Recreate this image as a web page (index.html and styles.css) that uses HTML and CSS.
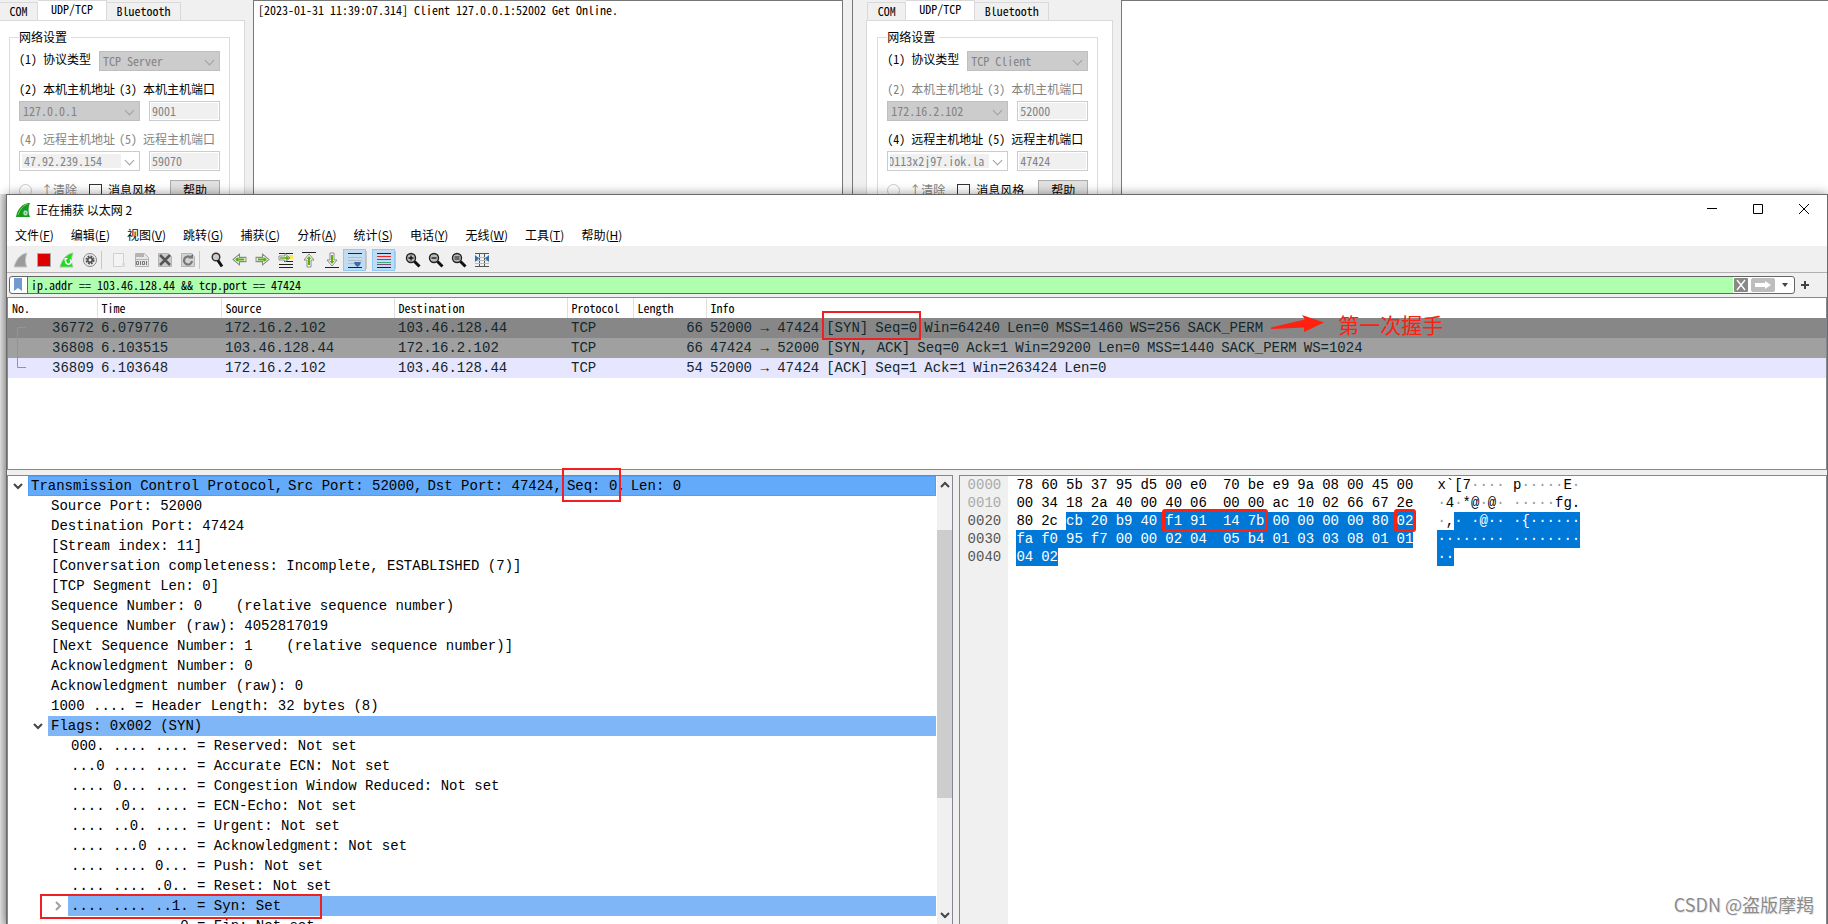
FILE: index.html
```html
<!DOCTYPE html>
<html lang="zh-CN">
<head>
<meta charset="utf-8">
<title>正在捕获 以太网 2</title>
<link rel="stylesheet" href="styles.css">
</head>
<body>
<svg class="defs" width="0" height="0" aria-hidden="true">
  <defs>
    <symbol id="arrow" viewBox="0 0 14 12"><path d="M1 4h6V1l6 5-6 5V8H1z" fill="#fff" stroke="#8a8a84"/><path d="M2.500 6h8" stroke="#58b010" stroke-width="2"/><path d="M8 3.500 11 6 8 8.500z" fill="#58b010"/></symbol>
    <symbol id="lens" viewBox="0 0 16 16"><circle cx="6" cy="6" r="4.500" fill="#b9bcb6" stroke="#222" stroke-width="1.400"/><path d="m9.500 9.500 5 5" stroke="#111" stroke-width="3"/></symbol>
  </defs>
</svg>

<div class="desktop">
  <section class="tool-window">
    <div class="side">
      <nav class="tabs"><button>COM</button><button class="active">UDP/TCP</button><button>Bluetooth</button></nav>
      <form class="tab-page">
        <fieldset>
          <legend>网络设置</legend>
          <div class="type-row"><label for="p1">(1) 协议类型</label><span class="combo grey"><select id="p1" disabled><option>TCP Server</option></select></span></div>
          <div class="labels"><label for="h1">(2) 本机主机地址</label><label for="o1">(3) 本机主机端口</label></div>
          <div class="controls"><span class="combo grey"><select id="h1" disabled><option>127.0.0.1</option></select></span><input id="o1" value="9001" disabled></div>
          <div class="labels dim"><label for="r1">(4) 远程主机地址</label><label for="q1">(5) 远程主机端口</label></div>
          <div class="controls"><span class="combo"><input id="r1" value="47.92.239.154" disabled></span><input id="q1" value="59070" disabled></div>
          <div class="options"><label class="dim clear"><input type="radio" disabled>↑清除</label><label class="style"><input type="checkbox">消息风格</label><button type="button">帮助</button></div>
        </fieldset>
      </form>
    </div>
    <textarea class="log" aria-label="log">[2023-01-31 11:39:07.314] Client 127.0.0.1:52002 Get Online.</textarea>
  </section>
  <section class="tool-window second">
    <div class="side">
      <nav class="tabs"><button>COM</button><button class="active">UDP/TCP</button><button>Bluetooth</button></nav>
      <form class="tab-page">
        <fieldset>
          <legend>网络设置</legend>
          <div class="type-row"><label for="p2">(1) 协议类型</label><span class="combo grey"><select id="p2" disabled><option>TCP Client</option></select></span></div>
          <div class="labels dim"><label for="h2">(2) 本机主机地址</label><label for="o2">(3) 本机主机端口</label></div>
          <div class="controls"><span class="combo grey"><select id="h2" disabled><option>172.16.2.102</option></select></span><input id="o2" value="52000" disabled></div>
          <div class="labels"><label for="r2">(4) 远程主机地址</label><label for="q2">(5) 远程主机端口</label></div>
          <div class="controls"><span class="combo"><input id="r2" class="scrolled" value="0113x2j97.iok.la" disabled></span><input id="q2" value="47424" disabled></div>
          <div class="options"><label class="dim clear"><input type="radio" disabled>↑清除</label><label class="style"><input type="checkbox">消息风格</label><button type="button">帮助</button></div>
        </fieldset>
      </form>
    </div>
    <textarea class="log" aria-label="log"></textarea>
  </section>
</div>

<main class="capture">
  <header class="titlebar">
    <svg width="16" height="16" viewBox="0 0 16 16"><path d="M1 15C2 8 7 1 15 1c-2 4-2 10 0 14z" fill="#159a1c"/><path d="M3 13C5 7 9 3 13 2" stroke="#6ad465" fill="none"/><circle cx="10.500" cy="11" r="2.500" fill="#d8f3d4" stroke="#4a7"/><circle cx="10.500" cy="11" r="1" fill="#4a7"/></svg>
    <h1>正在捕获 以太网 2</h1>
    <button aria-label="最小化"><svg width="12" height="12"><path d="M1 5.500h10" stroke="#000"/></svg></button>
    <button aria-label="最大化"><svg width="12" height="12"><path d="M1.500 1.500h9v9h-9z" fill="none" stroke="#000"/></svg></button>
    <button aria-label="关闭"><svg width="12" height="12"><path d="m1 1 10 10M11 1 1 11" stroke="#000"/></svg></button>
  </header>
  <nav class="menubar">
    <button>文件(<u>F</u>)</button><button>编辑(<u>E</u>)</button><button>视图(<u>V</u>)</button><button>跳转(<u>G</u>)</button><button>捕获(<u>C</u>)</button><button>分析(<u>A</u>)</button><button>统计(<u>S</u>)</button><button>电话(<u>Y</u>)</button><button>无线(<u>W</u>)</button><button>工具(<u>T</u>)</button><button>帮助(<u>H</u>)</button>
  </nav>
  <div class="toolbar">
    <button aria-label="开始"><svg width="16" height="16"><path d="M1 15C3 8 7 2 14 1c-2 5-2 10 0 14z" fill="#9b9b9b" stroke="#c8c8c8"/></svg></button>
    <button aria-label="停止"><svg width="16" height="16"><path d="M1.500 1.500h13v13h-13z" fill="#d00" stroke="#aaa"/></svg></button>
    <button aria-label="重新开始"><svg width="16" height="16"><path d="M1 15C3 8 7 2 14 1c-2 5-2 10 0 14z" fill="#1fdb1f" stroke="#9c9"/><path d="M11 7.500a2.600 2.600 0 1 1-4 1" fill="none" stroke="#fff" stroke-width="1.500"/><path d="M5.500 9.500V6H9z" fill="#fff"/></svg></button>
    <button aria-label="选项"><svg width="16" height="16"><circle cx="8" cy="8" r="6.500" fill="#eee" stroke="#888"/><circle cx="8" cy="8" r="3.300" fill="none" stroke="#555" stroke-width="2.500" stroke-dasharray="1.700 .9"/><circle cx="8" cy="8" r="3" fill="#555"/><circle cx="8" cy="8" r="1.400" fill="#eee"/></svg></button>
    <i></i>
    <button aria-label="打开"><svg width="16" height="16"><path d="M2.500 1.500h10v13h-10z" fill="#f4f4f4" stroke="#d0d0d0"/><path d="M11 11h3v4h-3z" fill="#ddd"/></svg></button>
    <button aria-label="保存"><svg width="16" height="16"><path d="M1.500 1.500h9l4 4v9h-13z" fill="#e6e6e6" stroke="#b4b4b4"/><path d="M2 2h8v3H2zM2 7h12v1H2z" fill="#b4b4b4"/><path d="M2.500 9.500h2v3h-2zM6.500 9v4M8.500 9.500h2v3h-2zM12.500 9v4" fill="none" stroke="#777"/></svg></button>
    <button aria-label="关闭文件"><svg width="16" height="16"><path d="M1.500 1.500h10l3 3v10h-13z" fill="#ccc" stroke="#b4b4b4"/><path d="m3 3 10 10M13 3 3 13" stroke="#555" stroke-width="2.500"/></svg></button>
    <button aria-label="重新加载"><svg width="16" height="16"><path d="M1.500 1.500h10l3 3v10h-13z" fill="#d4d4d4" stroke="#b4b4b4"/><path d="M12 9a4 4 0 1 1-2-4" fill="none" stroke="#777" stroke-width="2.200"/><path d="M8 6.500h5v-5z" fill="#777"/></svg></button>
    <i></i>
    <button aria-label="查找"><svg width="16" height="16"><circle cx="7" cy="5" r="3.800" fill="#ccc" stroke="#333" stroke-width="1.400"/><path d="m9 8.500 4 6" stroke="#111" stroke-width="3"/></svg></button>
    <button aria-label="后退"><svg class="left" width="15" height="13"><use href="#arrow"/></svg></button>
    <button aria-label="前进"><svg width="15" height="13"><use href="#arrow"/></svg></button>
    <button aria-label="转到分组"><svg width="16" height="16"><path d="M1 1.500h14M1 12.500h14M1 15.500h14M6 9.500h9" stroke="#222"/><path d="M11 3h4v4h-4z" fill="#fce94f"/><path d="M1 4h6V1.500L12 6l-5 4V8H1z" fill="#fff" stroke="#8a8a84"/><path d="M2 6h8M8 4.500 10 6 8 7.500" stroke="#58b010" stroke-width="1.600" fill="none"/></svg></button>
    <button aria-label="首个分组"><svg width="16" height="16"><path d="M1 .5h14" stroke="#222"/><path d="M6 15V8H3l5-6 5 6h-3v7z" fill="#fff" stroke="#8a8a84"/><path d="M8 13V5" stroke="#58b010" stroke-width="2"/><path d="M5.500 7 8 4l2.500 3z" fill="#58b010"/></svg></button>
    <button aria-label="最新分组"><svg width="16" height="16"><path d="M1 15.500h14" stroke="#222"/><path d="M6 1v7H3l5 6 5-6h-3V1z" fill="#fff" stroke="#8a8a84"/><path d="M8 3v8" stroke="#58b010" stroke-width="2"/><path d="M5.500 9 8 12l2.500-3z" fill="#58b010"/></svg></button>
    <button class="on" aria-label="自动滚动"><svg width="16" height="16"><path d="M1 1.500h14M1 15.500h14" stroke="#222"/><path d="M1 5.500h14M1 8.500h14M1 11.500h7" stroke="#b8bcb4"/><path d="M7 10h7l-1 3-2.500 2L8 13z" fill="#3a6db0"/></svg></button>
    <i></i>
    <button class="on" aria-label="着色"><svg width="16" height="16"><path d="M1 1.500h14M1 15.500h14" stroke="#222"/><path d="M1 4.500h14" stroke="#e22"/><path d="M1 7.500h14" stroke="#26c"/><path d="M1 10.500h14" stroke="#4a8"/><path d="M1 12.500h14" stroke="#75507b"/></svg></button>
    <i></i>
    <button aria-label="放大"><svg width="16" height="16"><use href="#lens"/><path d="M3.500 6h5M6 3.500v5" stroke="#111" stroke-width="1.300"/></svg></button>
    <button aria-label="缩小"><svg width="16" height="16"><use href="#lens"/><path d="M3.500 6h5" stroke="#111" stroke-width="1.300"/></svg></button>
    <button aria-label="正常大小"><svg width="16" height="16"><use href="#lens"/><path d="M3.500 5h5M3.500 7h5" stroke="#111"/></svg></button>
    <button aria-label="调整列宽"><svg width="16" height="16"><path d="M1 1.500h14M1 14.500h14M5.500 1v14M10.500 1v14" stroke="#555"/><path d="M1 5.500h14M1 8.500h14M1 11.500h14" stroke="#bbb"/><path d="m1 3 4 3.500L1 10zM15 3l-4 3.500L15 10z" fill="#2f6fb5"/></svg></button>
  </div>
  <div class="filterbar">
    <div class="filter">
      <button class="bookmark" aria-label="书签"><svg width="10" height="14"><path d="M1 0h8v13L5 10l-4 3z" fill="#6f9bd0"/></svg></button>
      <input aria-label="显示过滤器" value="ip.addr == 103.46.128.44 &amp;&amp; tcp.port == 47424">
      <button aria-label="清除"><svg width="14" height="14"><rect width="14" height="14" rx="1" fill="#888a85"/><path d="m3 2 8 10M11 2 3 12" stroke="#fff" stroke-width="1.300"/></svg></button>
      <button aria-label="应用"><svg width="24" height="14"><rect width="24" height="14" rx="2" fill="#bdbdbd"/><path d="M4 5h10V3l6 4-6 4V9H4z" fill="#fff"/></svg></button>
      <button class="drop" aria-label="历史"><svg width="8" height="5"><path d="M1 0h6L4 4z" fill="#444"/></svg></button>
    </div>
    <button class="plus" aria-label="添加"><svg width="8" height="8"><path d="M0 4h8M4 0v8" stroke="#444" stroke-width="2"/></svg></button>
  </div>

  <section class="packets">
    <table>
      <colgroup><col class="c-no"><col class="c-time"><col class="c-addr"><col class="c-addr"><col class="c-proto"><col class="c-len"><col></colgroup>
      <thead><tr><th>No.</th><th>Time</th><th>Source</th><th>Destination</th><th>Protocol</th><th>Length</th><th>Info</th></tr></thead>
      <tbody>
        <tr class="dark"><td class="num"><svg class="bracket" width="10" height="42"><path d="M9 .5H.5v40H9" fill="none" stroke="#8b979c"/></svg>36772</td><td>6.079776</td><td>172.16.2.102</td><td>103.46.128.44</td><td>TCP</td><td class="num">66</td>
          <td><div class="info"><span>52000 → 47424</span><span class="mark syn-mark"><span>[SYN]</span><span>Seq=0</span></span><span>Win=64240</span><span>Len=0</span><span>MSS=1460</span><span>WS=256</span><span>SACK_PERM</span>
            <span class="note"><svg width="56" height="18"><path d="m1 12.500 34-8L32 0l22 7.500L34 17v-4.500L1 14z" fill="#ff2010"/></svg>第一次握手</span></div></td></tr>
        <tr class="mid"><td class="num">36808</td><td>6.103515</td><td>103.46.128.44</td><td>172.16.2.102</td><td>TCP</td><td class="num">66</td>
          <td><div class="info"><span>47424 → 52000</span><span>[SYN, ACK]</span><span>Seq=0</span><span>Ack=1</span><span>Win=29200</span><span>Len=0</span><span>MSS=1440</span><span>SACK_PERM</span><span>WS=1024</span></div></td></tr>
        <tr class="pale"><td class="num">36809</td><td>6.103648</td><td>172.16.2.102</td><td>103.46.128.44</td><td>TCP</td><td class="num">54</td>
          <td><div class="info"><span>52000 → 47424</span><span>[ACK]</span><span>Seq=1</span><span>Ack=1</span><span>Win=263424</span><span>Len=0</span></div></td></tr>
      </tbody>
    </table>
  </section>

  <div class="details">
    <section class="tree-pane">
      <ul class="tree">
        <li class="current"><button aria-label="折叠"><svg width="10" height="7"><path d="m1 1 4 4 4-4" fill="none" stroke="#444" stroke-width="2"/></svg></button><span class="label fields"><span>Transmission Control Protocol,</span><span>Src Port: 52000,</span><span>Dst Port: 47424,</span><span><span class="mark seq-mark">Seq: 0</span>,</span><span>Len: 0</span></span></li>
        <li class="l1"><span class="label">Source Port: 52000</span></li>
        <li class="l1"><span class="label">Destination Port: 47424</span></li>
        <li class="l1"><span class="label">[Stream index: 11]</span></li>
        <li class="l1"><span class="label">[Conversation completeness: Incomplete, ESTABLISHED (7)]</span></li>
        <li class="l1"><span class="label">[TCP Segment Len: 0]</span></li>
        <li class="l1"><span class="label">Sequence Number: 0    (relative sequence number)</span></li>
        <li class="l1"><span class="label">Sequence Number (raw): 4052817019</span></li>
        <li class="l1"><span class="label">[Next Sequence Number: 1    (relative sequence number)]</span></li>
        <li class="l1"><span class="label">Acknowledgment Number: 0</span></li>
        <li class="l1"><span class="label">Acknowledgment number (raw): 0</span></li>
        <li class="l1"><span class="label">1000 .... = Header Length: 32 bytes (8)</span></li>
        <li class="l1 lit open"><button aria-label="折叠"><svg width="10" height="7"><path d="m1 1 4 4 4-4" fill="none" stroke="#444" stroke-width="2"/></svg></button><span class="label">Flags: 0x002 (SYN)</span></li>
        <li class="l2"><span class="label">000. .... .... = Reserved: Not set</span></li>
        <li class="l2"><span class="label">...0 .... .... = Accurate ECN: Not set</span></li>
        <li class="l2"><span class="label">.... 0... .... = Congestion Window Reduced: Not set</span></li>
        <li class="l2"><span class="label">.... .0.. .... = ECN-Echo: Not set</span></li>
        <li class="l2"><span class="label">.... ..0. .... = Urgent: Not set</span></li>
        <li class="l2"><span class="label">.... ...0 .... = Acknowledgment: Not set</span></li>
        <li class="l2"><span class="label">.... .... 0... = Push: Not set</span></li>
        <li class="l2"><span class="label">.... .... .0.. = Reset: Not set</span></li>
        <li class="l2 lit open flag"><button aria-label="展开"><svg width="7" height="10"><path d="m1 1 4 4-4 4" fill="none" stroke="#a0a0a0" stroke-width="2"/></svg></button><span class="label">.... .... ..1. = Syn: Set</span></li>
        <li class="l2"><span class="label">.... .... ...0 = Fin: Not set</span></li>
      </ul>
      <div class="scrollbar">
        <button aria-label="向上"><svg width="10" height="7"><path d="m1 6 4-4 4 4" fill="none" stroke="#444" stroke-width="2"/></svg></button>
        <div class="track"><div class="thumb"></div></div>
        <button aria-label="向下"><svg width="10" height="7"><path d="m1 1 4 4 4-4" fill="none" stroke="#444" stroke-width="2"/></svg></button>
      </div>
    </section>
    <section class="hex-pane">
      <div class="offsets"><span class="faint">0000</span><span class="faint">0010</span><span>0020</span><span>0030</span><span>0040</span></div>
      <div class="bytes">
        <div class="run"><b>78</b><b>60</b><b>5b</b><b>37</b><b>95</b><b>d5</b><b>00</b><b>e0</b><b class="g">70</b><b>be</b><b>e9</b><b>9a</b><b>08</b><b>00</b><b>45</b><b>00</b></div>
        <div class="run"><b>00</b><b>34</b><b>18</b><b>2a</b><b>40</b><b>00</b><b>40</b><b>06</b><b class="g">00</b><b>00</b><b>ac</b><b>10</b><b>02</b><b>66</b><b>67</b><b>2e</b></div>
        <div class="run"><b>80</b><b>2c</b><span class="run sel"><b>cb</b><b>20</b><b>b9</b><b>40</b><span class="run mark byte-mark"><b>f1</b><b>91</b><b class="g">14</b><b>7b</b></span><b>00</b><b>00</b><b>00</b><b>00</b><b>80</b><b class="mark byte-mark">02</b></span></div>
        <div class="run"><span class="run sel"><b>fa</b><b>f0</b><b>95</b><b>f7</b><b>00</b><b>00</b><b>02</b><b>04</b><b class="g">05</b><b>b4</b><b>01</b><b>03</b><b>03</b><b>08</b><b>01</b><b>01</b></span></div>
        <div class="run"><span class="run sel"><b>04</b><b>02</b></span></div>
      </div>
      <div class="ascii">
        <div class="line">x`[7<s>····</s> p<s>·····</s>E<s>·</s></div>
        <div class="line"><s>·</s>4<s>·</s>*@<s>·</s>@<s>·</s> <s>·····</s>fg.</div>
        <div class="line"><s>·</s>,<span class="sel">· ·@·· ·{······</span></div>
        <div class="line"><span class="sel">········ ········</span></div>
        <div class="line"><span class="sel">··</span></div>
      </div>
      <div class="watermark">CSDN @盗版摩羯</div>
    </section>
  </div>
</main>
</body>
</html>
```
FILE: styles.css
```css
*, *::after { box-sizing: border-box; }
body {
  margin: 0;
  height: 100vh;
  overflow: hidden;
  display: flex;
  flex-direction: column;
  background: linear-gradient(90deg, #e6e6e6, #c8c8c8 6px);
  font: 12px/16px "Noto Sans Mono CJK SC", "Liberation Mono", "Noto Sans CJK SC", monospace;
  color: #000;
}
button, input, select, textarea { font: inherit; color: inherit; margin: 0; padding: 0; border: 0; background: none; border-radius: 0; }
.defs { position: absolute; }

/* serial/network tool windows */
.desktop { flex: 0 0 194px; overflow: hidden; display: flex; background: #f0f0f0; }
.tool-window { flex: 854 1 0; min-width: 0; display: flex; padding-right: 9px; }
.tool-window.second { flex-grow: 974; padding: 0 0 0 13px; border-left: 1px solid #777; }
.side { flex: 0 0 245px; min-width: 0; display: flex; flex-direction: column; }
.second .side { flex-basis: 247px; }
.tabs { display: flex; align-items: flex-end; height: 20px; }
.tabs button { height: 18px; border: 1px solid #d9d9d9; border-bottom: 0; border-left: 0; background: #f0f0f0; width: 74px; padding-bottom: 2px; }
.tabs button:first-child { width: 38px; }
.second .tabs button:first-child { width: 39px; border-left: 1px solid #d9d9d9; margin-left: 1px; }
.tabs .active { width: 69px; height: 20px; background: #fff; padding-bottom: 3px; }
.tab-page { flex: 1 0 auto; background: #fff; border: 1px solid #d9d9d9; border-left: 0; padding: 8px 14px 0 9px; }
.second .tab-page { border-left: 1px solid #d9d9d9; padding-left: 10px; }
fieldset { margin: 0; padding: 6px 9px 0; border: 1px solid #dcdcdc; border-bottom: 0; min-width: 0; height: 190px; }
legend { padding: 0 4px 0 0; }
.type-row { display: flex; height: 20px; }
.type-row label { flex: 1; white-space: nowrap; }
.type-row .combo { flex: 0 0 121px; }
.labels { display: flex; gap: 4px; height: 19px; margin: 8px 0 3px; white-space: nowrap; align-items: center; }
.dim { color: #838383; }
.controls { display: flex; gap: 9px; height: 20px; }
.controls > .combo { flex: 0 0 121px; min-width: 0; }
.combo { position: relative; border: 1px solid #ccc; display: flex; padding: 2px 18px 2px 2px; color: #838383; background: #fff; }
.combo.grey { background: #ccc; border-color: #bfbfbf; padding: 0; }
.combo::after { content: ""; position: absolute; right: 6px; top: 5px; width: 7px; height: 7px; border: solid #a0a0a0; border-width: 0 1px 1px 0; transform: rotate(45deg); }
.combo select { flex: 1; appearance: none; padding-left: 3px; opacity: 1; color: #838383; }
.combo input { flex: 1; min-width: 0; background: #f0f0f0; color: #838383; padding-left: 2px; }
.combo .scrolled { padding-left: 0; text-indent: -2px; }
.controls > input { flex: 1; min-width: 0; border: 1px solid #ccc; background: #f0f0f0; box-shadow: inset 0 0 0 1px #fff; padding-left: 2px; color: #838383; }
.options { display: flex; margin-top: 10px; height: 18px; align-items: center; }
.options label { display: flex; align-items: center; gap: 6px; white-space: nowrap; }
.options .clear { flex: 0 0 70px; gap: 9px; }
.options .style { flex: 1; }
.options input { appearance: none; width: 13px; height: 13px; border: 1px solid #333; background: #fff; }
.options input[type="radio"] { border-radius: 50%; border-color: #ccc; }
.options button { width: 50px; height: 20px; border: 1px solid #adadad; background: #e1e1e1; }
.log { flex: 1; min-width: 0; margin-left: 8px; border: 1px solid #777; border-bottom: 0; background: #fff; padding: 1px 4px; resize: none; outline: 0; overflow: hidden; }
.second .log { border-right: 0; }

/* capture window */
.capture { flex: 1; min-height: 0; margin-left: 6px; border: 1px solid #6b6b6b; border-bottom: 0; background: #f0f0f0; display: flex; flex-direction: column; box-shadow: 0 0 10px rgba(0, 0, 0, .4); position: relative; }
.titlebar, .menubar { font-family: "Noto Sans CJK SC", sans-serif; background: #fff; display: flex; align-items: center; }
.titlebar { flex: 0 0 30px; padding-left: 8px; }
.titlebar h1 { flex: 1; margin: 0 0 0 5px; font-size: 12px; font-weight: 400; }
.titlebar button { width: 46px; height: 30px; }
.menubar { flex: 0 0 22px; padding: 0 0 2px 8px; gap: 17px; border-bottom: 1px solid #eee; }
.menubar button { white-space: nowrap; }
.toolbar { flex: 0 0 26px; display: flex; align-items: center; padding-left: 2px; border-bottom: 1px solid #b0b0b0; }
.toolbar button { flex: 0 0 23px; height: 22px; display: flex; align-items: center; justify-content: center; }
.toolbar .on { background: #c0dcf3; border: 1px solid #90c8f6; }
.toolbar i { flex: 0 0 6px; height: 18px; border-left: 1px solid #c8c8c8; }
.left { transform: scaleX(-1); }
.filterbar { flex: 0 0 24px; display: flex; align-items: center; padding: 0 15px 0 2px; gap: 3px; }
.filter { flex: 1; height: 18px; display: flex; align-items: stretch; border: 1px solid #666; border-radius: 3px; background: #fff; }
.filter > button { padding: 0 2px 0 1px; display: flex; align-items: center; justify-content: center; }
.filter .bookmark { width: 18px; border-right: 1px solid #666; }
.filter input { flex: 1; min-width: 0; background: #afffaf; padding-left: 3px; outline: 0; }
.filter .drop { width: 17px; }
.plus { width: 14px; display: flex; justify-content: center; }
.packets { flex: 172 1 0; min-height: 0; border: 1px solid #828790; background: #fff; }
table { width: 100%; border-collapse: collapse; table-layout: fixed; }
.c-no { width: 89px; }
.c-time { width: 124px; }
.c-addr { width: 173px; }
.c-proto { width: 66px; }
.c-len { width: 73px; }
th { height: 20px; padding: 0 4px; text-align: left; font-weight: 400; border-right: 1px solid #e0e0e0; }
th:last-child { border: 0; }
td { height: 20px; padding: 0 3px 0 4px; font: 14px/20px "Liberation Mono", monospace; color: #12272e; white-space: nowrap; position: relative; }
.num { text-align: right; }
.dark { background: #878787; }
.mid { background: #a0a0a0; }
.pale { background: #e7e6ff; }
.bracket { position: absolute; left: 9px; top: 9px; z-index: 1; }
.info, .info .mark { display: flex; gap: 7px; }
.fields { display: flex; gap: 5px; }
.mark { position: relative; }
.mark::after { content: ""; position: absolute; border: 2px solid #ee2024; }
.syn-mark::after { inset: -7px -4px -2px; z-index: 1; }
.note { display: flex; align-items: center; gap: 12px; height: 12px; font: 21px/12px "Noto Sans CJK SC", sans-serif; color: #ff2010; z-index: 1; }

.details { flex: 450 1 0; min-height: 0; display: flex; gap: 6px; margin-top: 5px; }
.tree-pane, .hex-pane { border: 1px solid #828790; border-bottom: 0; background: #fff; display: flex; min-width: 0; }
.tree-pane { flex: 947 1 0; }
.hex-pane { flex: 868 1 0; position: relative; font: 14px/18px "Liberation Mono", monospace; }
.tree { list-style: none; margin: 0; padding: 0; flex: 1; min-width: 0; font: 14px/20px "Liberation Mono", monospace; }
.tree li { display: flex; height: 20px; padding-left: 20px; position: relative; }
.tree button { flex: 0 0 20px; display: flex; align-items: center; justify-content: center; }
.tree .current { padding-left: 0; }
.tree .l1 { padding-left: 40px; }
.tree .l2 { padding-left: 60px; }
.tree .l1.open { padding-left: 20px; }
.tree .l2.open { padding-left: 40px; }
.label { flex: 1; padding-left: 3px; white-space: pre; }
.current .label { background: #64aafa; box-shadow: inset 0 0 0 1px #4f9ff5; }
.lit .label { background: #7eb6f7; }
.seq-mark::after { inset: -10px -4px -8px -5px; }
.flag::after { content: ""; position: absolute; left: 32px; top: -2px; width: 282px; height: 25px; border: 2px solid #ee2024; }
.scrollbar { flex: 0 0 15px; margin-left: 1px; background: #f0f0f0; display: flex; flex-direction: column; align-items: stretch; }
.scrollbar button { flex: 0 0 17px; display: flex; align-items: center; justify-content: center; }
.track { flex: 1; padding-top: 37px; }
.thumb { height: 71%; background: #cdcdcd; }
.offsets { flex: 0 0 48px; background: #f0f0f0; display: flex; flex-direction: column; align-items: center; color: #555; }
.faint { color: #aaa; }
.bytes { flex: 0 0 429px; padding-left: 8px; }
.run { display: flex; gap: 8px; height: 18px; }
.bytes b { font-weight: 400; }
.bytes .g { margin-left: 8px; }
.sel { background: #0078d7; color: #fff; }
.byte-mark::after { inset: -3px -3px -2px; border-width: 3px; border-color: #ff2010; border-radius: 3px; }
.line { height: 18px; white-space: pre; }
.line s { text-decoration: none; color: #999; }
.line .sel { display: inline-block; height: 18px; }
.watermark { position: absolute; right: 12px; bottom: 8px; font: 18px/24px "Noto Sans CJK SC", sans-serif; color: #8c8c8c; text-shadow: 1px 1px 0 #e8e8e8; }
```
